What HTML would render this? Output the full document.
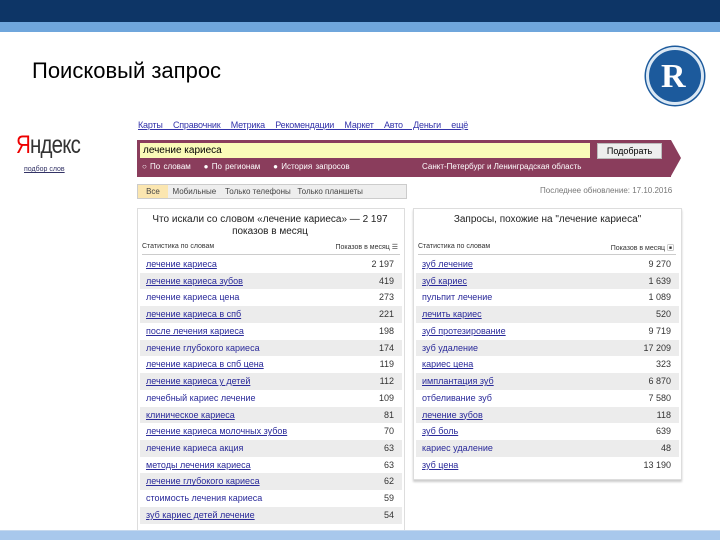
<!DOCTYPE html>
<html><head><meta charset="utf-8"><style>
*{margin:0;padding:0;box-sizing:border-box}
body{width:720px;height:540px;background:#fff;position:relative;overflow:hidden;font-family:"Liberation Sans","Noto Sans CJK SC",sans-serif}
.a{position:absolute}
.r{position:absolute;height:16.7px;font-size:9px;line-height:16.7px;color:#2a2a9a}
.r span{position:absolute;left:6px}
.r b{position:absolute;right:8px;font-weight:normal;color:#333}
.u{text-decoration:underline}
</style></head><body>
<div class="a" style="left:0;top:0;width:720px;height:22px;background:#0d3566"></div>
<div class="a" style="left:0;top:22px;width:720px;height:10px;background:#6fa6dc"></div>
<div class="a" style="left:0;top:530px;width:720px;height:10px;background:#a8c8ec;border-top:1px solid #c6d9ee"></div>
<div class="a" style="left:32px;top:58px;font-size:22px;color:#000">Поисковый запрос</div>
<div class="a" style="left:646px;top:47px;width:58px;height:58px;border-radius:50%;background:#1c5a9c;border:3px solid #dbe8f4;box-shadow:0 0 0 1.5px #1c5a9c"></div>
<div class="a" style="left:661px;top:58px;font-size:34px;color:#fff;font-family:'Liberation Serif',serif;font-weight:bold">R</div>
<div class="a" style="left:16px;top:131px;font-size:25px;color:#333;letter-spacing:-1px;transform:scaleX(0.82);transform-origin:left"><span style="color:#e00">Я</span>ндекс</div>
<div class="a u" style="left:24px;top:166px;font-size:7px;color:#336">подбор слов</div>
<div class="a u" style="left:138px;top:120px;font-size:9px;color:#33a;word-spacing:8px;letter-spacing:-0.2px">Карты Справочник Метрика Рекомендации Маркет Авто Деньги ещё</div>
<div class="a" style="left:137px;top:140px;width:534px;height:37px;background:#8a3d5c"></div>
<div class="a" style="left:671px;top:140px;width:0;height:0;border-top:18.5px solid transparent;border-bottom:18.5px solid transparent;border-left:10px solid #8a3d5c"></div>
<div class="a" style="left:140px;top:143px;width:450px;height:15px;background:#fafbb8;font-size:10px;padding-left:3px;line-height:15px">лечение кариеса</div>
<div class="a" style="left:597px;top:143px;width:65px;height:16px;background:#eee;border:1px solid #bbb;font-size:9px;text-align:center;line-height:14px">Подобрать</div>
<div class="a" style="left:142px;top:162px;font-size:8px;color:#fff;word-spacing:1px">○ По словам &nbsp;&nbsp;&nbsp;● По регионам &nbsp;&nbsp;&nbsp;● История запросов</div>
<div class="a" style="left:422px;top:162px;font-size:8px;color:#fff">Санкт-Петербург и Ленинградская область</div>
<div class="a" style="left:137px;top:184px;width:270px;height:15px;background:#eee;border:1px solid #ccc;font-size:8px;line-height:13px;color:#444"><span style="display:inline-block;width:30px;background:#fbe6b0;text-align:center">Все</span> &nbsp;Мобильные &nbsp;&nbsp;&nbsp;Только телефоны &nbsp;&nbsp;Только планшеты</div>
<div class="a" style="left:540px;top:186px;font-size:8px;color:#777">Последнее обновление: 17.10.2016</div>
<div class="a" style="left:137px;top:208px;width:268px;height:322px;border:1px solid #ddd;border-bottom:none"></div>
<div class="a" style="left:413px;top:208px;width:269px;height:272px;border:1px solid #ddd;box-shadow:0 2px 2px #ccc"></div>
<div class="a" style="left:150px;top:214px;width:240px;text-align:center;font-size:10px;line-height:12px;color:#222">Что искали со словом «лечение кариеса» — 2 197 показов в месяц</div>
<div class="a" style="left:413px;top:214px;width:269px;text-align:center;font-size:10px;color:#222">Запросы, похожие на "лечение кариеса"</div>
<div class="a" style="left:142px;top:243px;width:258px;height:12px;border-bottom:1px solid #ccc;font-size:7px;color:#333">Статистика по словам<span style="position:absolute;right:2px">Показов в месяц ☰</span></div>
<div class="a" style="left:418px;top:243px;width:258px;height:12px;border-bottom:1px solid #ccc;font-size:7px;color:#333">Статистика по словам<span style="position:absolute;right:2px">Показов в месяц ▣</span></div>
<div id="L"></div>
<script>
var L=[["лечение кариеса","2 197"],["лечение кариеса зубов","419"],["лечение кариеса цена","273"],["лечение кариеса в спб","221"],["после лечения кариеса","198"],["лечение глубокого кариеса","174"],["лечение кариеса в спб цена","119"],["лечение кариеса у детей","112"],["лечебный кариес лечение","109"],["клиническое кариеса","81"],["лечение кариеса молочных зубов","70"],["лечение кариеса акция","63"],["методы лечения кариеса","63"],["лечение глубокого кариеса","62"],["стоимость лечения кариеса","59"],["зуб кариес детей лечение","54"]];
var R=[["зуб лечение","9 270"],["зуб кариес","1 639"],["пульпит лечение","1 089"],["лечить кариес","520"],["зуб протезирование","9 719"],["зуб удаление","17 209"],["кариес цена","323"],["имплантация зуб","6 870"],["отбеливание зуб","7 580"],["лечение зубов","118"],["зуб боль","639"],["кариес удаление","48"],["зуб цена","13 190"]];
var h="";
function f(a,x,w){a.forEach(function(r,i){h+='<div class="r" style="left:'+x+'px;width:'+w+'px;top:'+(256+i*16.73)+'px;background:'+(i%2?'#ececec':'#fff')+'"><span class="'+(i%3!=2?'u':'')+'">'+r[0]+'</span><b>'+r[1]+'</b></div>';});}
f(L,140,262);f(R,416,263);
document.getElementById("L").innerHTML=h;
</script>
</body></html>
